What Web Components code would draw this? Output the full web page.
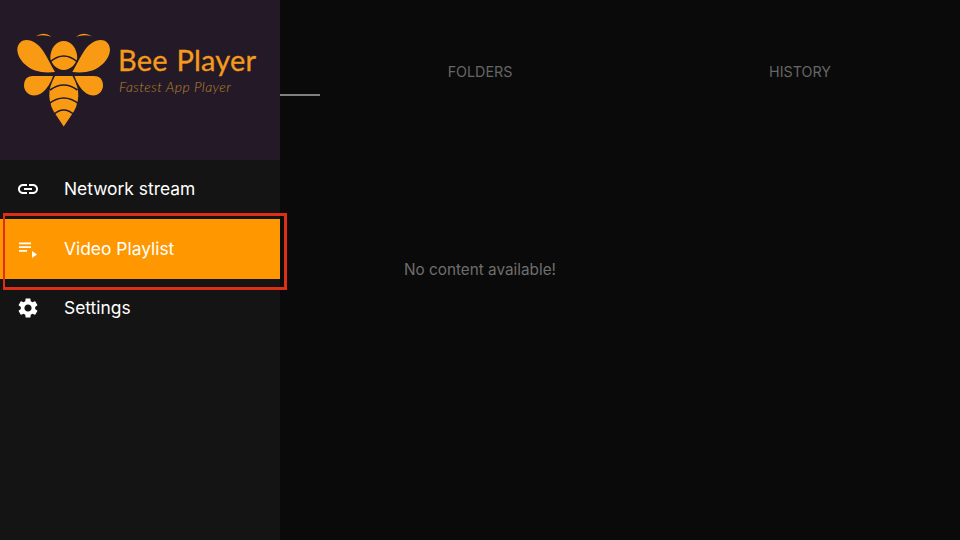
<!DOCTYPE html>
<html>
<head>
<meta charset="utf-8">
<style>
  html, body { margin: 0; height: 100%; background: #0a0a0a; }
</style>
</head>
<body>
<bee-app>
  <tab-bar slot="main"></tab-bar>
  <bee-drawer slot="drawer">
    <bee-logo slot="logo"></bee-logo>
    <nav-item label="Network stream" icon="link"></nav-item>
    <nav-item label="Video Playlist" icon="playlist" selected></nav-item>
    <nav-item label="Settings" icon="settings"></nav-item>
  </bee-drawer>
</bee-app>
<script>
const ICONS = {
  link: `<path d="M3.9 12c0-1.71 1.39-3.1 3.1-3.1h4V7H7c-2.76 0-5 2.24-5 5s2.24 5 5 5h4v-1.9H7c-1.71 0-3.1-1.39-3.1-3.1zM8 13h8v-2H8v2zm9-6h-4v1.9h4c1.71 0 3.1 1.39 3.1 3.1s-1.39 3.1-3.1 3.1h-4V17h4c2.76 0 5-2.24 5-5s-2.24-5-5-5z"/>`,
  playlist: `<path d="M3 5.500h12v1.800H3zM3 9.200h12v1.800H3zM3 12.900h8v1.800H3zM16 14l5 3.500-5 3.500z"/>`,
  settings: `<path d="M19.14 12.94c.04-.3.06-.61.06-.94 0-.32-.02-.64-.07-.94l2.03-1.58c.18-.14.23-.41.12-.61l-1.92-3.32c-.12-.22-.37-.29-.59-.22l-2.39.96c-.5-.38-1.03-.7-1.62-.94l-.36-2.54c-.04-.24-.24-.41-.48-.41h-3.84c-.24 0-.43.17-.47.41l-.36 2.54c-.59.24-1.13.57-1.62.94l-2.39-.96c-.22-.08-.47 0-.59.22L2.74 8.87c-.12.21-.08.47.12.61l2.03 1.58c-.05.3-.09.63-.09.94s.02.64.07.94l-2.03 1.58c-.18.14-.23.41-.12.61l1.92 3.32c.12.22.37.29.59.22l2.39-.96c.5.38 1.03.7 1.62.94l.36 2.54c.05.24.24.41.48.41h3.84c.24 0 .44-.17.47-.41l.36-2.54c.59-.24 1.13-.56 1.62-.94l2.39.96c.22.08.47 0 .59-.22l1.92-3.32c.12-.22.07-.47-.12-.61l-2.01-1.58zM12 15.600c-1.98 0-3.6-1.62-3.6-3.6s1.62-3.6 3.6-3.6 3.6 1.62 3.6 3.6-1.62 3.6-3.6 3.6z"/>`
};

class BeeApp extends HTMLElement {
  constructor() {
    super();
    this.attachShadow({ mode: "open" });
    this.shadowRoot.innerHTML = `
      <style>
        :host { display: block; position: relative; width: 960px; height: 540px; overflow: hidden; background: #0a0a0a; }
        .drawer { position: absolute; top: 0; left: 0; bottom: 0; width: 280px; }
        .main { display: flex; flex-direction: column; height: 100%; }
        .empty {
          position: absolute; left: 0; right: 0; top: 260.500px; text-align: center;
          font: 400 15.3px/18px Inter, sans-serif; color: #6e6e6e;
        }
      </style>
      <div class="main"><slot name="main"></slot></div>
      <div class="empty">No content available!</div>
      <div class="drawer"><slot name="drawer"></slot></div>
    `;
  }
}

class TabBar extends HTMLElement {
  constructor() {
    super();
    this.attachShadow({ mode: "open" });
    this.shadowRoot.innerHTML = `
      <style>
        :host { display: grid; grid-template-columns: repeat(3, 1fr); height: 96px; }
        div {
          display: flex; align-items: center; justify-content: center;
          padding-top: 47px; box-sizing: border-box; height: 96px;
          font: 400 14.300px/50px Inter, sans-serif; color: #666;
        }
        .on { border-bottom: 2px solid #808080; }
      </style>
      <div class="on"></div>
      <div>FOLDERS</div>
      <div>HISTORY</div>
    `;
  }
}

class BeeDrawer extends HTMLElement {
  constructor() {
    super();
    this.attachShadow({ mode: "open" });
    this.shadowRoot.innerHTML = `
      <style>
        :host { display: flex; flex-direction: column; height: 100%; background: #141414; }
      </style>
      <slot name="logo"></slot>
      <slot></slot>
    `;
  }
}

class BeeLogo extends HTMLElement {
  constructor() {
    super();
    this.attachShadow({ mode: "open" });
    this.shadowRoot.innerHTML = `
      <style>
        :host { display: flex; height: 160px; background: #241a27; box-sizing: border-box; padding: 0 0 0 118px; flex-direction: column; position: relative; }
        svg { position: absolute; left: 0; top: 0; }
        .name { font: 400 29px/30px Lato, sans-serif; letter-spacing: .2px; word-spacing: 1px; -webkit-text-stroke: .3px #f59a1c; color: #f59a1c; margin-top: 45px; white-space: nowrap; }
        .tag { font: italic 300 14px/16px Lato, sans-serif; letter-spacing: .4px; color: #b9832f; margin: 4px 0 0 1px; white-space: nowrap; }
      </style>
      <svg width="118" height="160" viewBox="0 0 118 160" fill="#f99a15">
        <path d="M35.700 36.300Q44 31 51.500 36.800Q44 34 35.700 36.300Z"/>
        <path d="M76 36.800Q83.500 31 92 36.300Q83.500 34 76 36.800Z"/>
        <path d="M17.300 50C17.500 43 22 40 26.500 40C33 40 38.500 44.500 42.500 50C47.500 57 50.500 65 55 72C48 72.800 41 72.500 35 70.500C27 67.500 18 60 17.300 50Z"/>
        <path d="M110 50C109.800 43 105.300 40 100.800 40C94.300 40 88.800 44.500 84.800 50C79.800 57 76.800 65 72.300 72C79.300 72.800 86.300 72.500 92.300 70.500C100.300 67.500 109.300 60 110 50Z"/>
        <path d="M50.300 58C50.300 48 56.500 41 63.700 41C70.900 41 77.200 48 77.200 58C76.500 63 71 70 63.700 70C56.400 70 51 63 50.300 58Z"/>
        <path d="M24 85.500C24 79 28 76 33 76L53 76C51 82 47 89.500 41 93.500C32 98.500 24 93 24 85.500Z"/>
        <path d="M103 85.500C103 79 99 76 94 76L74.500 76C76.500 82 80.500 89.500 86.500 93.500C95 98.500 103 93 103 85.500Z"/>
        <path d="M55 76L72.500 76Q78.800 87 78.300 96Q77.800 107 70.800 116L63.700 126.500L56.700 116Q49.800 107 49.300 96Q48.800 87 55 76Z"/>
        <g fill="none" stroke="#241a27" stroke-width="1.600">
          <path d="M50 62Q63.700 50 77.500 62"/>
          <path d="M50 90Q63.700 80 77.500 90"/>
          <path d="M48.500 104Q63.700 92 79 104"/>
          <path d="M53 115Q63.700 105 74.500 115"/>
        </g>
      </svg>
      <div class="name">Bee Player</div>
      <div class="tag">Fastest App Player</div>
    `;
  }
}

class NavItem extends HTMLElement {
  constructor() {
    super();
    this.attachShadow({ mode: "open" });
    const icon = ICONS[this.getAttribute("icon")];
    this.shadowRoot.innerHTML = `
      <style>
        :host { display: flex; align-items: center; box-sizing: border-box; height: 59px; padding-bottom: 2px; color: #fff; position: relative; font: 400 17.400px/24px Inter, sans-serif; }
        :host([selected]) { height: 60px; padding-bottom: 0; background: #ff9800; }
        svg { width: 24px; height: 24px; margin: 0 24px 0 16px; fill: #fff; flex: none; }
        :host([selected])::after {
          content: ""; position: absolute; left: 3px; top: -6px; right: -6.500px; bottom: -11px;
          box-sizing: border-box; border: 3px solid #dd2f17; border-left-width: 2px;
        }
      </style>
      <svg viewBox="0 0 24 24">${icon}</svg>
      <span>${this.getAttribute("label")}</span>
    `;
  }
}

customElements.define("bee-app", BeeApp);
customElements.define("tab-bar", TabBar);
customElements.define("bee-drawer", BeeDrawer);
customElements.define("bee-logo", BeeLogo);
customElements.define("nav-item", NavItem);
</script>
</body>
</html>
